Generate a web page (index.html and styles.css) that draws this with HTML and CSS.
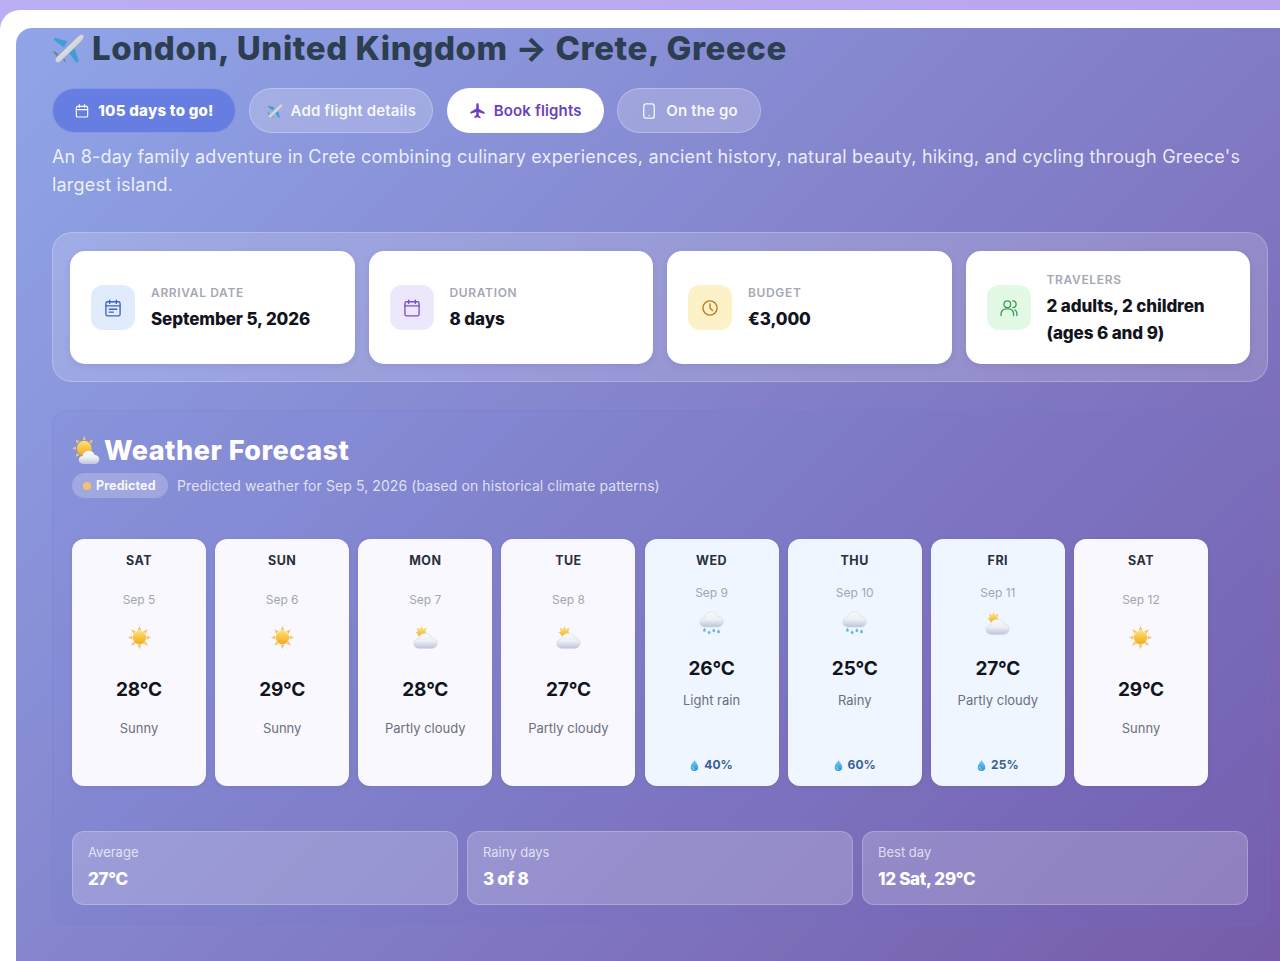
FILE: index.html
```html
<!DOCTYPE html>
<html lang="en">
<head>
    <meta charset="UTF-8">
    <meta name="viewport" content="width=device-width, initial-scale=1.0">
    <title>London to Crete</title>
    <link rel="stylesheet" href="styles.css">
</head>
<body>
    <svg class="sprite" aria-hidden="true">
        <defs>
            <linearGradient id="sunFill" x1="0" y1="0" x2="0" y2="1">
                <stop offset="0" stop-color="#fde26a"/>
                <stop offset="1" stop-color="#f5a623"/>
            </linearGradient>
            <linearGradient id="cloudFill" x1="0" y1="0" x2="0" y2="1">
                <stop offset="0" stop-color="#f8f9fc"/>
                <stop offset="0.5" stop-color="#eef0f6"/>
                <stop offset="1" stop-color="#bcc4d6"/>
            </linearGradient>
            <linearGradient id="dropFill" x1="0" y1="0" x2="0" y2="1">
                <stop offset="0" stop-color="#7fd0f5"/>
                <stop offset="1" stop-color="#2f8fd8"/>
            </linearGradient>
            <linearGradient id="bodyFill" x1="0" y1="0" x2="1" y2="1">
                <stop offset="0" stop-color="#ffffff"/>
                <stop offset="1" stop-color="#aab4be"/>
            </linearGradient>
            <path id="cloudShape" d="M8 29c-4 0-7-2.600-7-6.200 0-3.300 2.500-5.800 5.800-6 .6-4.300 4.400-7.300 8.800-7.300 4 0 7.300 2.300 8.400 5.800 3.900.2 7 3 7 6.800 0 3.900-3.200 6.900-7.500 6.900Z"/>
        </defs>
        <symbol id="e-plane" viewBox="0 0 32 32">
            <path d="M15 9 3 5.500 1.500 7.500 11.500 15ZM22 16l4 12.500-2.200 1.500L16.500 20Z" fill="#3f9fd4"/>
            <path d="M6 21 2 18.500 1 19.500l4 4.500ZM10 25l2.500 4.500 1-1L11 24Z" fill="#6b8797"/>
            <path d="M4 29c-1.500-1.500-.5-3.500 1.500-5.500L23 6.500c3-3 6-5 7.500-3.500s-.5 4.500-3.500 7.500L9.500 27.500C7.500 29.500 5.500 30.500 4 29Z" fill="url(#bodyFill)" stroke="#8d99a5" stroke-width=".4"/>
        </symbol>
        <symbol id="e-sun" viewBox="0 0 32 32">
            <g fill="#f7c766">
                <path d="M16 1l2.400 6h-4.800ZM16 31l2.400-6h-4.800ZM1 16l6-2.400v4.800ZM31 16l-6-2.400v4.800Z"/>
                <path d="M5.400 5.400l5.900 2.500-3.400 3.400ZM26.600 5.400l-2.500 5.900-3.400-3.400ZM5.400 26.600l2.500-5.900 3.400 3.400ZM26.600 26.600l-5.900-2.500 3.400-3.400Z"/>
            </g>
            <circle cx="16" cy="16" r="8.500" fill="url(#sunFill)"/>
        </symbol>
        <symbol id="e-sunny-cloud" viewBox="0 0 32 32">
            <g fill="#f7c766">
                <path d="M14 0l1.700 4.500h-3.400ZM14 28l1.700-4.500h-3.400ZM0 14l4.500-1.700v3.400ZM4 4l4.500 1.900-2.600 2.600ZM24 4l-1.900 4.500-2.600-2.600ZM4 24l1.900-4.500 2.600 2.600Z"/>
            </g>
            <circle cx="14" cy="14" r="8.500" fill="url(#sunFill)"/>
            <use href="#cloudShape" fill="url(#cloudFill)" transform="translate(7 9.500) scale(.78)"/>
        </symbol>
        <symbol id="e-partly" viewBox="0 0 32 32">
            <g fill="#f2c04e">
                <path d="M11 2l1.500 3.500h-3ZM3 9.500l3.500-1.300v2.600ZM4.800 3.800l3.400 1.400-2 2ZM17.200 3.800l-1.400 3.400-2-2Z"/>
            </g>
            <circle cx="11" cy="10" r="5.500" fill="url(#sunFill)"/>
            <use href="#cloudShape" fill="url(#cloudFill)" stroke="#d0d5e3" stroke-width=".7" transform="translate(0 1)"/>
        </symbol>
        <symbol id="e-rain" viewBox="0 0 32 32">
            <use href="#cloudShape" fill="url(#cloudFill)" stroke="#d0d5e3" stroke-width=".7" transform="translate(0 -8.500)"/>
            <g fill="#63b8e6">
                <path d="M7 21.500c1.200 1.700 1.800 2.500 1.800 3.300a1.800 1.800 0 0 1-3.600 0c0-.8.600-1.600 1.800-3.300Z"/>
                <path d="M13 24.500c1.200 1.700 1.800 2.500 1.800 3.300a1.800 1.800 0 0 1-3.600 0c0-.8.600-1.600 1.800-3.300Z"/>
                <path d="M19 22c1.200 1.700 1.800 2.500 1.800 3.300a1.800 1.800 0 0 1-3.600 0c0-.8.600-1.600 1.800-3.300Z"/>
                <path d="M25 23.500c1.200 1.700 1.800 2.500 1.800 3.300a1.800 1.800 0 0 1-3.600 0c0-.8.600-1.600 1.800-3.300Z"/>
            </g>
        </symbol>
        <symbol id="e-drop" viewBox="0 0 12 16">
            <path d="M6 .5C8.800 4.500 11 7.300 11 10.300a5 5 0 0 1-10 0C1 7.300 3.200 4.500 6 .5Z" fill="url(#dropFill)"/>
            <path d="M3.500 10.500c0 1.500.8 2.500 2 2.800" fill="none" stroke="#d4f0fd" stroke-width="1" stroke-linecap="round"/>
        </symbol>
    </svg>

    <div class="shell">
        <main class="hero">
            <h1 class="trip-title"><svg class="emoji-title"><use href="#e-plane"/></svg>London, United Kingdom → Crete, Greece</h1>

            <div class="pills">
                <span class="pill pill-count">
                    <svg class="pill-icon" viewBox="0 0 24 24"><rect x="3.500" y="5" width="17" height="16" rx="2"/><path d="M8 2.500v4M16 2.500v4M3.500 10h17"/></svg>
                    105 days to go!
                </span>
                <span class="pill pill-ghost">
                    <svg class="pill-emoji"><use href="#e-plane"/></svg>
                    Add flight details
                </span>
                <span class="pill pill-white">
                    <svg class="pill-plane" viewBox="0 0 24 24"><path d="M12 1.500c1 0 1.800 1.500 1.800 3.500v4.500l8.200 5v2.500l-8.200-2.500v4.500l2.500 2v2L12 21.500 7.700 22.500v-2l2.500-2V14l-8.200 2.500V14l8.200-5V5c0-2 .8-3.500 1.800-3.500Z"/></svg>
                    Book flights
                </span>
                <span class="pill pill-ghost">
                    <svg class="pill-icon pill-phone" viewBox="0 0 24 24"><rect x="5" y="2.500" width="14" height="19" rx="3"/><path d="M12 18h.01"/></svg>
                    On the go
                </span>
            </div>

            <p class="summary">An 8-day family adventure in Crete combining culinary experiences, ancient history, natural beauty, hiking, and cycling through Greece's largest island.</p>

            <section class="stats">
                <div class="stat">
                    <div class="stat-icon icon-blue">
                        <svg viewBox="0 0 24 24"><rect x="3.500" y="4.500" width="17" height="17" rx="2"/><path d="M8 2.500v4M16 2.500v4M3.500 9.500h17M7.500 13.500h9M7.500 17h5"/></svg>
                    </div>
                    <div class="stat-text">
                        <div class="stat-label">Arrival date</div>
                        <div class="stat-value">September 5, 2026</div>
                    </div>
                </div>
                <div class="stat">
                    <div class="stat-icon icon-purple">
                        <svg viewBox="0 0 24 24"><rect x="3.500" y="4.500" width="17" height="17" rx="2"/><path d="M8 2.500v4M16 2.500v4M3.500 9.500h17"/></svg>
                    </div>
                    <div class="stat-text">
                        <div class="stat-label">Duration</div>
                        <div class="stat-value">8 days</div>
                    </div>
                </div>
                <div class="stat">
                    <div class="stat-icon icon-amber">
                        <svg viewBox="0 0 24 24"><circle cx="12" cy="12" r="8.500"/><path d="M12 7v5l3 3"/></svg>
                    </div>
                    <div class="stat-text">
                        <div class="stat-label">Budget</div>
                        <div class="stat-value">€3,000</div>
                    </div>
                </div>
                <div class="stat">
                    <div class="stat-icon icon-green">
                        <svg viewBox="0 0 24 24"><circle cx="10" cy="7.500" r="4"/><path d="M2.500 21v-2a6 6 0 0 1 6-6h3a6 6 0 0 1 6 6v2M16.500 3.500a4 4 0 0 1 0 8M21.500 21v-2a6 6 0 0 0-2.500-4.800"/></svg>
                    </div>
                    <div class="stat-text">
                        <div class="stat-label">Travelers</div>
                        <div class="stat-value">2 adults, 2 children<br>(ages 6 and 9)</div>
                    </div>
                </div>
            </section>

            <section class="weather">
                <h2 class="weather-title"><svg class="emoji-weather"><use href="#e-sunny-cloud"/></svg>Weather Forecast</h2>
                <div class="weather-note">
                    <span class="badge"><span class="badge-dot"></span>Predicted</span>
                    <span class="note-text">Predicted weather for Sep 5, 2026 (based on historical climate patterns)</span>
                </div>

                <div class="days">
                    <div class="day">
                        <div class="day-name">SAT</div>
                        <div class="day-date">Sep 5</div>
                        <svg class="day-icon"><use href="#e-sun"/></svg>
                        <div class="day-temp">28°C</div>
                        <div class="day-desc">Sunny</div>
                    </div>
                    <div class="day">
                        <div class="day-name">SUN</div>
                        <div class="day-date">Sep 6</div>
                        <svg class="day-icon"><use href="#e-sun"/></svg>
                        <div class="day-temp">29°C</div>
                        <div class="day-desc">Sunny</div>
                    </div>
                    <div class="day">
                        <div class="day-name">MON</div>
                        <div class="day-date">Sep 7</div>
                        <svg class="day-icon"><use href="#e-partly"/></svg>
                        <div class="day-temp">28°C</div>
                        <div class="day-desc">Partly cloudy</div>
                    </div>
                    <div class="day">
                        <div class="day-name">TUE</div>
                        <div class="day-date">Sep 8</div>
                        <svg class="day-icon"><use href="#e-partly"/></svg>
                        <div class="day-temp">27°C</div>
                        <div class="day-desc">Partly cloudy</div>
                    </div>
                    <div class="day day-wet">
                        <div class="day-name">WED</div>
                        <div class="day-date">Sep 9</div>
                        <svg class="day-icon"><use href="#e-rain"/></svg>
                        <div class="day-temp">26°C</div>
                        <div class="day-desc">Light rain</div>
                        <div class="day-rain"><svg class="drop"><use href="#e-drop"/></svg>40%</div>
                    </div>
                    <div class="day day-wet">
                        <div class="day-name">THU</div>
                        <div class="day-date">Sep 10</div>
                        <svg class="day-icon"><use href="#e-rain"/></svg>
                        <div class="day-temp">25°C</div>
                        <div class="day-desc">Rainy</div>
                        <div class="day-rain"><svg class="drop"><use href="#e-drop"/></svg>60%</div>
                    </div>
                    <div class="day day-wet">
                        <div class="day-name">FRI</div>
                        <div class="day-date">Sep 11</div>
                        <svg class="day-icon"><use href="#e-partly"/></svg>
                        <div class="day-temp">27°C</div>
                        <div class="day-desc">Partly cloudy</div>
                        <div class="day-rain"><svg class="drop"><use href="#e-drop"/></svg>25%</div>
                    </div>
                    <div class="day">
                        <div class="day-name">SAT</div>
                        <div class="day-date">Sep 12</div>
                        <svg class="day-icon"><use href="#e-sun"/></svg>
                        <div class="day-temp">29°C</div>
                        <div class="day-desc">Sunny</div>
                    </div>
                </div>

                <div class="tiles">
                    <div class="tile">
                        <div class="tile-label">Average</div>
                        <div class="tile-value">27°C</div>
                    </div>
                    <div class="tile">
                        <div class="tile-label">Rainy days</div>
                        <div class="tile-value">3 of 8</div>
                    </div>
                    <div class="tile">
                        <div class="tile-label">Best day</div>
                        <div class="tile-value">12 Sat, 29°C</div>
                    </div>
                </div>
            </section>
        </main>
    </div>
</body>
</html>
```

FILE: styles.css
```css
html, body {
    height: 100%;
}

body {
    margin: 0;
    overflow: hidden;
    background: linear-gradient(90deg, #bcaef2, #b9a5ee);
    font-family: "Inter", "Liberation Sans", sans-serif;
}

.sprite {
    position: absolute;
    width: 0;
    height: 0;
}

.shell {
    margin-top: 10px;
    height: 951px;
    box-sizing: border-box;
    padding: 18px 0 0 16px;
    background: #fff;
    border-radius: 20px 0 0 0;
}

.hero {
    height: 933px;
    box-sizing: border-box;
    padding: 0 12px 0 36px;
    border-radius: 16px 0 0 0;
    background: linear-gradient(135deg, #90a5e8, #765cab);
}

.trip-title {
    display: flex;
    align-items: center;
    height: 40px;
    margin: 0 0 20px;
    font-size: 33px;
    font-weight: 800;
    letter-spacing: 0.6px;
    color: #2c3e50;
    white-space: nowrap;
}

.emoji-title {
    width: 33px;
    height: 33px;
    margin-right: 7px;
}

.pills {
    display: flex;
    gap: 13.33px;
    margin-bottom: 10px;
}

.pill {
    display: flex;
    align-items: center;
    justify-content: center;
    gap: 8px;
    height: 45px;
    box-sizing: border-box;
    border-radius: 23px;
    font-size: 15px;
    font-weight: 600;
    letter-spacing: 0.15px;
    white-space: nowrap;
}

.pill:nth-child(1) { width: 184px; }
.pill:nth-child(2) { width: 184px; }
.pill:nth-child(3) { width: 157px; }
.pill:nth-child(4) { width: 144px; }

.pill-count {
    background: #667ee2;
    border: 1px solid rgba(255, 255, 255, 0.2);
    color: #fff;
    font-weight: 800;
    letter-spacing: 0.25px;
}

.pill-ghost {
    background: rgba(255, 255, 255, 0.2);
    border: 1px solid rgba(255, 255, 255, 0.25);
    color: rgba(255, 255, 255, 0.92);
}

.pill-white {
    background: #fff;
    color: #6b3fc0;
}

.pill-icon {
    width: 16px;
    height: 16px;
    fill: none;
    stroke: currentColor;
    stroke-width: 1.7;
    stroke-linecap: round;
    stroke-linejoin: round;
}

.pill-phone {
    width: 18px;
    height: 18px;
}

.pill-emoji {
    width: 16px;
    height: 16px;
}

.pill-plane {
    width: 17px;
    height: 17px;
    fill: #6b3fc0;
}

.summary {
    width: 1200px;
    margin: 0 0 33px;
    font-size: 18px;
    line-height: 28px;
    letter-spacing: 0.2px;
    color: rgba(255, 255, 255, 0.85);
}

.stats {
    display: grid;
    grid-template-columns: repeat(4, 1fr);
    gap: 14px;
    width: 1216px;
    height: 150px;
    box-sizing: border-box;
    padding: 18px 17px 17px;
    margin-bottom: 28px;
    background: rgba(255, 255, 255, 0.16);
    border: 1px solid rgba(255, 255, 255, 0.22);
    border-radius: 20px;
}

.stat {
    display: flex;
    align-items: center;
    gap: 16px;
    padding: 0 20px 0 21px;
    background: #fff;
    border-radius: 15px;
    box-shadow: 0 2px 6px rgba(60, 50, 120, 0.1);
}

.stat-icon {
    display: flex;
    align-items: center;
    justify-content: center;
    flex: none;
    width: 44px;
    height: 45px;
    border-radius: 12px;
}

.stat-icon svg {
    width: 20px;
    height: 20px;
    fill: none;
    stroke: currentColor;
    stroke-width: 1.6;
    stroke-linecap: round;
    stroke-linejoin: round;
}

.icon-blue { background: #e0ebfb; color: #3f63c4; }
.icon-purple { background: #ece7fb; color: #7c4fc9; }
.icon-amber { background: #fdf2c7; color: #bd7420; }
.icon-green { background: #e1f9e5; color: #3f9a58; }

.stat-text {
    padding-top: 3px;
}

.stat-label {
    margin-bottom: 6px;
    font-size: 12px;
    font-weight: 600;
    letter-spacing: 0.65px;
    text-transform: uppercase;
    color: #a5a8b3;
}

.stat-value {
    font-size: 17px;
    font-weight: 800;
    line-height: 27px;
    letter-spacing: -0.1px;
    color: #12141d;
}

.weather {
    width: 1216px;
    height: 515px;
    box-sizing: border-box;
    padding: 21px 19px 20px;
    background: rgba(95, 110, 210, 0.07);
    border: 1px solid rgba(110, 120, 215, 0.2);
    border-radius: 16px;
}

.weather-title {
    display: flex;
    align-items: center;
    height: 36px;
    margin: 0 0 5px;
    font-size: 27px;
    font-weight: 800;
    letter-spacing: 0.5px;
    color: #fff;
}

.emoji-weather {
    width: 28px;
    height: 28px;
    margin-right: 4px;
}

.weather-note {
    display: flex;
    align-items: center;
    gap: 9px;
    margin-bottom: 41px;
}

.badge {
    display: flex;
    align-items: center;
    gap: 5px;
    height: 25px;
    width: 96px;
    box-sizing: border-box;
    padding-left: 11px;
    border-radius: 13px;
    background: rgba(255, 255, 255, 0.22);
    font-size: 12.5px;
    font-weight: 700;
    letter-spacing: 0.1px;
    color: rgba(255, 255, 255, 0.92);
}

.badge-dot {
    width: 8px;
    height: 8px;
    border-radius: 50%;
    background: #f5c26b;
}

.note-text {
    font-size: 14px;
    letter-spacing: 0.08px;
    color: rgba(255, 255, 255, 0.75);
}

.days {
    display: flex;
    gap: 9.15px;
    margin-bottom: 45px;
}

.day {
    display: flex;
    flex-direction: column;
    align-items: center;
    width: 134px;
    height: 247px;
    box-sizing: border-box;
    padding-top: 14px;
    background: #f8f8fe;
    border-radius: 12px;
    box-shadow: 0 1px 4px rgba(60, 50, 120, 0.1);
}

.day-wet {
    background: #f0f6ff;
}

.day-name {
    font-size: 12.5px;
    line-height: 15px;
    font-weight: 700;
    letter-spacing: 0.5px;
    color: #2b2f3d;
}

.day-date {
    margin-top: 24px;
    font-size: 12px;
    line-height: 16px;
    color: #a3a6b1;
}

.day-icon {
    width: 25px;
    height: 25px;
    margin-top: 17px;
}

.day-temp {
    margin-top: 28px;
    font-size: 19px;
    line-height: 24px;
    font-weight: 700;
    letter-spacing: -0.2px;
    color: #12141d;
}

.day-desc {
    margin-top: 18px;
    font-size: 13px;
    line-height: 16px;
    color: #6b6f7c;
}

.day-wet .day-date {
    margin-top: 17px;
}

.day-wet .day-icon {
    margin-top: 10px;
}

.day-wet .day-temp {
    margin-top: 21px;
}

.day-wet .day-desc {
    margin-top: 11px;
}

.day-rain {
    display: flex;
    align-items: center;
    gap: 5px;
    margin-top: auto;
    margin-bottom: 13px;
    font-size: 12px;
    line-height: 16px;
    font-weight: 700;
    letter-spacing: 0.1px;
    color: #37608f;
}

.drop {
    width: 9px;
    height: 13px;
}

.tiles {
    display: grid;
    grid-template-columns: repeat(3, 1fr);
    gap: 9px;
}

.tile {
    height: 74px;
    box-sizing: border-box;
    padding: 11px 15px;
    background: rgba(255, 255, 255, 0.2);
    border: 1px solid rgba(255, 255, 255, 0.22);
    border-radius: 12px;
}

.tile-label {
    margin-bottom: 6px;
    font-size: 13px;
    line-height: 18px;
    color: rgba(255, 255, 255, 0.72);
}

.tile-value {
    font-size: 17px;
    line-height: 24px;
    font-weight: 800;
    letter-spacing: -0.3px;
    color: #fff;
}
```
